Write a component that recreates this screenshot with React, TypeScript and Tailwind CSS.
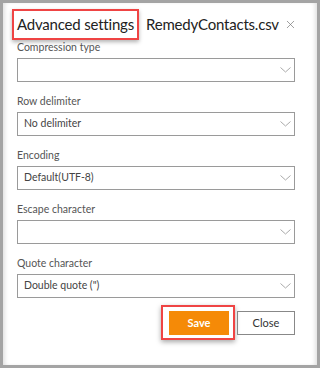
import { X } from 'lucide-react';

const fields = [
  { label: 'Compression type', value: '' },
  { label: 'Row delimiter', value: 'No delimiter' },
  { label: 'Encoding', value: 'Default(UTF-8)' },
  { label: 'Escape character', value: '' },
  { label: 'Quote character', value: 'Double quote (")' },
];

function Chevron() {
  return (
    <svg width="11" height="6" viewBox="0 0 11 6" fill="none" className="mr-[-1px]">
      <polyline points="0.5,0.5 5.5,5 10.5,0.5" stroke="#aaa" strokeWidth="1" />
    </svg>
  );
}

function App() {
  return (
    <div className="w-[320px] h-[368px] bg-[#a4a4a4] p-[3px] font-['Lato',sans-serif]">
      <div className="h-full bg-white shadow-[inset_4px_0_4px_-2px_rgba(0,0,0,0.12),inset_-4px_0_4px_-2px_rgba(0,0,0,0.12)] pl-[14px] pr-[22px] pt-[6px]">
        {/* Header */}
        <div className="flex items-center h-[31px] whitespace-nowrap text-[15px] tracking-[-0.2px] text-[#222]">
          <span className="shrink-0 -ml-[5px] border-2 border-[#ef4444] px-[3px] h-[31px] flex items-center shadow-[0_2px_4px_rgba(0,0,0,0.3)]">
            Advanced settings
          </span>
          <span className="shrink-0 ml-[7px]">RemedyContacts.csv</span>
          <X className="shrink-0 ml-[5px] w-[13px] h-[13px] text-[#777]" strokeWidth={1.3} />
        </div>

        {/* Fields */}
        <div className="flex flex-col gap-[13px] mt-[1px]">
          {fields.map((f) => (
            <div key={f.label} className="flex flex-col">
              <label className="text-[10.5px] text-[#555] leading-[13px] mb-[4px] whitespace-nowrap">{f.label}</label>
              <div className="h-[24px] border border-[#9a9a9a] flex items-center justify-between pl-[6px] pr-[4px] text-[10.5px] text-[#444]">
                <span>{f.value}</span>
                <Chevron />
              </div>
            </div>
          ))}
        </div>

        {/* Buttons */}
        <div className="flex justify-end items-start mt-[7px] gap-[2px]">
          <div className="border-2 border-[#ef4444] pl-[6px] pr-[4px] pt-[4px] pb-[3px] shadow-[0_2px_5px_rgba(0,0,0,0.35)]">
            <button className="block w-[60px] h-[24px] bg-[#f58a07] text-white text-[11px] font-bold">Save</button>
          </div>
          <button className="mt-[6px] w-[58px] h-[24px] border border-[#888] text-[11px] text-[#333]">Close</button>
        </div>
      </div>
    </div>
  );
}

export default App;
